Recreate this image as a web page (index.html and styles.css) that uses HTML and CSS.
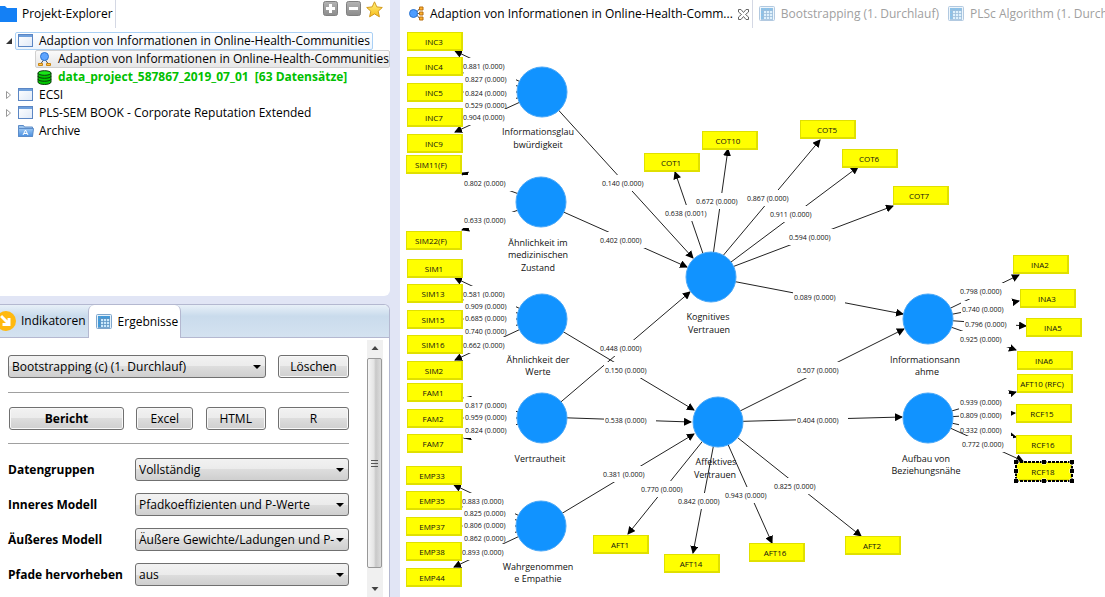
FILE: index.html
```html
<!DOCTYPE html>
<html lang="de">
<head>
<meta charset="utf-8">
<title>SmartPLS</title>
<link rel="stylesheet" href="styles.css">
</head>
<body>
<svg class="defs" aria-hidden="true">
  <defs>
    <linearGradient id="fade" x1="0" y1="0" x2="1" y2="1"><stop offset="0" stop-color="#fff"/><stop offset="1" stop-color="#dfe9f7"/></linearGradient>
    <linearGradient id="blue" x1="0" y1="0" x2="0" y2="1"><stop offset="0" stop-color="#9cc8f4"/><stop offset="1" stop-color="#4a8fe0"/></linearGradient>
    <linearGradient id="grey" x1="0" y1="0" x2="0" y2="1"><stop offset="0" stop-color="#b4b4b4"/><stop offset="1" stop-color="#8c8c8c"/></linearGradient>
    <linearGradient id="gold" x1="0" y1="0" x2="0" y2="1"><stop offset="0" stop-color="#fff27a"/><stop offset="1" stop-color="#f8bd1c"/></linearGradient>
    <symbol id="i-window" viewBox="0 0 16 14"><rect x=".5" y=".5" width="14" height="12" fill="url(#fade)" stroke="#5b86c4"/><path d="M1 2h13" stroke="#6fa0dc" stroke-width="2"/></symbol>
    <symbol id="i-table" viewBox="0 0 16 16"><rect x=".5" y=".5" width="15" height="14" rx="1" fill="#e4f1fb" stroke="#7fa6cc"/><path d="M2 2h12v11H2z" fill="#cbe8fb"/><path d="M2 2h12v3H2zM2 5h3v8H2z" fill="#3f9bdc"/><path d="M2 4.500h12M2 7.500h12M2 10.500h12M4.500 2v11M7.500 2v11M10.500 2v11M13.500 2v11M2 13.500h12" stroke="#5c93c4" stroke-width=".8"/></symbol>
  </defs>
</svg>
<div class="app">
  <div class="side">
    <section class="explorer">
      <header class="explorer-head">
        <h1 class="tab-title">
          <svg class="folder" width="17" height="17" viewBox="0 0 17 17"><path d="M0 0h5l2 2h10v14H0z" fill="#1480f5"/></svg>Projekt-Explorer
        </h1>
        <div class="tools">
          <button class="icon-btn" aria-label="Neu"><svg width="15" height="15"><rect x=".5" y=".5" width="14" height="14" rx="2" fill="url(#grey)" stroke="#808080"/><path d="M7.500 3v9M3 7.500h9" stroke="#fff" stroke-width="3"/></svg></button>
          <button class="icon-btn" aria-label="Entfernen"><svg width="15" height="15"><rect x=".5" y=".5" width="14" height="14" rx="2" fill="url(#grey)" stroke="#808080"/><path d="M3 7.500h9" stroke="#fff" stroke-width="3"/></svg></button>
          <button class="icon-btn" aria-label="Favorit"><svg width="17" height="17"><path d="M8.500.8l2.300 5.100 5.500.6-4.100 3.700 1.200 5.600-4.900-2.900-4.900 2.900 1.200-5.600L.7 6.500l5.500-.6z" fill="url(#gold)" stroke="#d39a1c"/></svg></button>
        </div>
      </header>
      <ul class="tree">
        <li class="row"><svg class="twist" width="8" height="8"><path d="M7 1v6H1z" fill="#333"/></svg><span class="item focus"><svg width="16" height="14"><use href="#i-window"/></svg>Adaption von Informationen in Online-Health-Communities</span></li>
        <li class="row sub"><span class="item picked"><svg width="16" height="15"><path d="M7.500 7L3.500 12M7.500 7l4 5" stroke="#555"/><circle cx="7.500" cy="4.500" r="4" fill="#5da4ff" stroke="#2d74cf"/><path d="M1.500 11.500h4v2h-4zM9.500 11.500h4v2h-4z" fill="#ffc34d" stroke="#c98410"/></svg>Adaption von Informationen in Online-Health-Communities</span></li>
        <li class="row sub"><span class="item data"><svg width="16" height="15"><path d="M1 3v9c0 3.300 13 3.300 13 0V3z" fill="#00c800" stroke="#0a3c0a"/><ellipse cx="7.500" cy="3" rx="6.500" ry="2.300" fill="#19e619" stroke="#0a3c0a"/><path d="M1 6c0 3 13 3 13 0M1 9c0 3 13 3 13 0" fill="none" stroke="#0a3c0a"/></svg>data_project_587867_2019_07_01&nbsp; [63 Datensätze]</span></li>
        <li class="row"><svg class="twist" width="8" height="8"><path d="M1.500.5L5.500 4l-4 3.500z" fill="#fff" stroke="#999"/></svg><span class="item"><svg width="16" height="14"><use href="#i-window"/></svg>ECSI</span></li>
        <li class="row"><svg class="twist" width="8" height="8"><path d="M1.500.5L5.500 4l-4 3.500z" fill="#fff" stroke="#999"/></svg><span class="item"><svg width="16" height="14"><use href="#i-window"/></svg>PLS-SEM BOOK - Corporate Reputation Extended</span></li>
        <li class="row"><span class="twist"></span><span class="item"><svg width="16" height="14"><path d="M.5 1.500h5l1 1.500h8v9.500H.5z" fill="#9cc4ee" stroke="#5c8cc8"/><path d="M.5 4.500h15l-1 8H.5z" fill="url(#blue)" stroke="#5c8cc8"/><path d="M5 11l2.500-5L10 11M6 9.500h3" fill="none" stroke="#fff"/></svg>Archive</span></li>
      </ul>
    </section>
    <section class="results">
      <nav class="tabs">
        <button class="tab"><svg width="16" height="20" viewBox="0 0 16 20"><circle cx="6" cy="10" r="10" fill="#ffb90f"/><path d="M1 5l7 7M9 7v6.500H2.500" fill="none" stroke="#fff" stroke-width="3"/></svg>Indikatoren</button>
        <button class="tab active"><svg width="16" height="16"><use href="#i-table"/></svg>Ergebnisse</button>
      </nav>
      <div class="pane">
        <form class="form">
          <div class="line run">
            <span class="drop"><select aria-label="Lauf"><option>Bootstrapping (c) (1. Durchlauf)</option></select></span>
            <button type="button" class="btn">Löschen</button>
          </div>
          <hr>
          <div class="line exports">
            <button type="button" class="btn strong">Bericht</button>
            <button type="button" class="btn">Excel</button>
            <button type="button" class="btn">HTML</button>
            <button type="button" class="btn">R</button>
          </div>
          <hr>
          <div class="fields">
            <label for="f1">Datengruppen</label><span class="drop"><select id="f1"><option>Vollständig</option></select></span>
            <label for="f2">Inneres Modell</label><span class="drop"><select id="f2"><option>Pfadkoeffizienten und P-Werte</option></select></span>
            <label for="f3">Äußeres Modell</label><span class="drop"><select id="f3"><option>Äußere Gewichte/Ladungen und P-Werte</option></select></span>
            <label for="f4">Pfade hervorheben</label><span class="drop"><select id="f4"><option>aus</option></select></span>
          </div>
        </form>
        <div class="scroll">
          <svg width="16" height="16"><path d="M4.500 10h7L8 6z" fill="#444"/></svg>
          <div class="thumb"><i></i><i></i><i></i></div>
          <svg width="16" height="16"><path d="M4.500 6h7L8 10z" fill="#444"/></svg>
        </div>
      </div>
    </section>
  </div>
  <main class="editor">
    <nav class="doc-tabs">
      <button class="doc active"><svg width="16" height="16"><path d="M6 7.500h4M7 7l4-5M7 8l4 5" stroke="#555"/><circle cx="4.500" cy="7.500" r="4" fill="#4d9dff" stroke="#2d74cf"/><path d="M10.500 1h3.500v3h-3.500zM10.500 6h3.500v3h-3.500zM10.500 11h3.500v3h-3.500z" fill="#ffb22e" stroke="#b86e10"/></svg><span>Adaption von Informationen in Online-Health-Comm...</span><svg class="close" width="11" height="11"><path d="M.5.5h2.500l2.500 3 2.500-3h2.500v2.500L7.500 5.500l3 2.500v2.500H8L5.500 7.500 3 10.500H.5V8l3-2.500-3-2.500z" fill="#fff" stroke="#666"/></svg></button>
      <button class="doc"><svg width="16" height="16"><use href="#i-table"/></svg><span>Bootstrapping (1. Durchlauf)</span></button>
      <button class="doc"><svg width="16" height="16"><use href="#i-table"/></svg><span>PLSc Algorithm (1. Durchlauf)</span></button>
    </nav>
    <svg class="model" width="705" height="569" viewBox="400 28 705 569" role="img" aria-label="Strukturmodell">
      <defs>
        <marker id="tip" viewBox="0 0 8 8" refX="7" refY="4" markerWidth="8" markerHeight="8" markerUnits="userSpaceOnUse" orient="auto"><path d="M0 0l8 4-8 4z"/></marker>
        <rect id="bg" x="-1" y="-8" width="52" height="16" fill="#fff"/>
        <g id="box"><rect width="56" height="19" fill="#e0e000"/><rect x="1" y="1" width="53" height="16" fill="#ff0"/></g>
      </defs>
      <g class="name">
        <text x="538" y="135">Informationsglau</text><text x="538" y="148">bwürdigkeit</text>
        <text x="538" y="246">Ähnlichkeit im</text><text x="538" y="258">medizinischen</text><text x="538" y="271">Zustand</text>
        <text x="538" y="363">Ähnlichkeit der</text><text x="538" y="375">Werte</text>
        <text x="540" y="462">Vertrautheit</text>
        <text x="538" y="570">Wahrgenommen</text><text x="538" y="582">e Empathie</text>
        <text x="708" y="320">Kognitives</text><text x="709" y="333">Vertrauen</text>
        <text x="716" y="465">Affektives</text><text x="715" y="478">Vertrauen</text>
        <text x="925" y="363">Informationsann</text><text x="927" y="375">ahme</text>
        <text x="926" y="462">Aufbau von</text><text x="926" y="474">Beziehungsnähe</text>
      </g>
      <g class="edges">
        <line x1="542" y1="92" x2="455" y2="51"/><use href="#bg" x="463" y="66"/><text x="463" y="69">0.881 (0.000)</text>
        <line x1="542" y1="92" x2="464" y2="73"/><use href="#bg" x="465" y="79"/><text x="465" y="82">0.827 (0.000)</text>
        <line x1="542" y1="92" x2="464" y2="92"/><use href="#bg" x="465" y="93"/><text x="465" y="96">0.824 (0.000)</text>
        <line x1="542" y1="92" x2="464" y2="111"/><use href="#bg" x="465" y="105"/><text x="465" y="108">0.529 (0.000)</text>
        <line x1="542" y1="92" x2="455" y2="132"/><use href="#bg" x="463" y="117"/><text x="463" y="120">0.904 (0.000)</text>
        <line x1="541" y1="202" x2="461" y2="173"/><use href="#bg" x="464" y="183"/><text x="464" y="186">0.802 (0.000)</text>
        <line x1="541" y1="202" x2="462" y2="230"/><use href="#bg" x="464" y="220"/><text x="464" y="223">0.633 (0.000)</text>
        <line x1="542" y1="319" x2="455" y2="278"/><use href="#bg" x="463" y="294"/><text x="463" y="297">0.581 (0.000)</text>
        <line x1="542" y1="319" x2="464" y2="300"/><use href="#bg" x="465" y="306"/><text x="465" y="309">0.909 (0.000)</text>
        <line x1="542" y1="319" x2="464" y2="319"/><use href="#bg" x="465" y="318"/><text x="465" y="321">0.685 (0.000)</text>
        <line x1="542" y1="319" x2="464" y2="338"/><use href="#bg" x="465" y="331"/><text x="465" y="334">0.740 (0.000)</text>
        <line x1="542" y1="319" x2="455" y2="360"/><use href="#bg" x="463" y="345"/><text x="463" y="348">0.662 (0.000)</text>
        <line x1="542" y1="418" x2="464" y2="398"/><use href="#bg" x="465" y="405"/><text x="465" y="408">0.817 (0.000)</text>
        <line x1="542" y1="418" x2="464" y2="418"/><use href="#bg" x="465" y="417"/><text x="465" y="420">0.959 (0.000)</text>
        <line x1="542" y1="418" x2="464" y2="438"/><use href="#bg" x="465" y="430"/><text x="465" y="433">0.824 (0.000)</text>
        <line x1="541" y1="526" x2="454" y2="485"/><use href="#bg" x="462" y="501"/><text x="462" y="504">0.883 (0.000)</text>
        <line x1="541" y1="526" x2="463" y2="507"/><use href="#bg" x="464" y="513"/><text x="464" y="516">0.825 (0.000)</text>
        <line x1="541" y1="526" x2="463" y2="526"/><use href="#bg" x="464" y="525"/><text x="464" y="528">0.806 (0.000)</text>
        <line x1="541" y1="526" x2="463" y2="545"/><use href="#bg" x="464" y="538"/><text x="464" y="541">0.862 (0.000)</text>
        <line x1="541" y1="526" x2="454" y2="567"/><use href="#bg" x="462" y="552"/><text x="462" y="555">0.893 (0.000)</text>

        <line x1="542" y1="92" x2="693" y2="258"/><use href="#bg" x="602" y="183"/><text x="602" y="186">0.140 (0.000)</text>
        <line x1="541" y1="202" x2="687" y2="267"/><use href="#bg" x="600" y="240"/><text x="600" y="243">0.402 (0.000)</text>
        <line x1="542" y1="418" x2="690" y2="292"/><use href="#bg" x="600" y="348"/><text x="600" y="351">0.448 (0.000)</text>
        <line x1="542" y1="319" x2="694" y2="410"/><use href="#bg" x="605" y="370"/><text x="605" y="373">0.150 (0.000)</text>
        <line x1="542" y1="417" x2="691" y2="422"/><use href="#bg" x="605" y="420"/><text x="605" y="423">0.538 (0.000)</text>
        <line x1="541" y1="526" x2="694" y2="434"/><use href="#bg" x="603" y="474"/><text x="603" y="477">0.381 (0.000)</text>
        <line x1="711" y1="277" x2="903" y2="314"/><use href="#bg" x="794" y="297"/><text x="794" y="300">0.089 (0.000)</text>
        <line x1="718" y1="422" x2="904" y2="329"/><use href="#bg" x="797" y="370"/><text x="797" y="373">0.507 (0.000)</text>
        <line x1="718" y1="422" x2="902" y2="417"/><use href="#bg" x="797" y="420"/><text x="797" y="423">0.404 (0.000)</text>

        <line x1="711" y1="277" x2="675" y2="172"/><use href="#bg" x="665" y="213"/><text x="665" y="216">0.638 (0.001)</text>
        <line x1="710" y1="277" x2="728" y2="149"/><use href="#bg" x="696" y="201"/><text x="696" y="204">0.672 (0.000)</text>
        <line x1="711" y1="270" x2="820" y2="140"/><use href="#bg" x="747" y="198"/><text x="747" y="201">0.867 (0.000)</text>
        <line x1="711" y1="277" x2="858" y2="167"/><use href="#bg" x="770" y="214"/><text x="770" y="217">0.911 (0.000)</text>
        <line x1="711" y1="275" x2="893" y2="206"/><use href="#bg" x="789" y="237"/><text x="789" y="240">0.594 (0.000)</text>

        <line x1="718" y1="422" x2="628" y2="534"/><use href="#bg" x="641" y="489"/><text x="641" y="492">0.770 (0.000)</text>
        <line x1="718" y1="422" x2="693" y2="553"/><use href="#bg" x="678" y="501"/><text x="678" y="504">0.842 (0.000)</text>
        <line x1="718" y1="422" x2="772" y2="543"/><use href="#bg" x="725" y="495"/><text x="725" y="498">0.943 (0.000)</text>
        <line x1="718" y1="422" x2="861" y2="536"/><use href="#bg" x="774" y="486"/><text x="774" y="489">0.825 (0.000)</text>

        <line x1="928" y1="319" x2="1019" y2="275"/><use href="#bg" x="960" y="291"/><text x="960" y="294">0.798 (0.000)</text>
        <line x1="928" y1="319" x2="1019" y2="301"/><use href="#bg" x="962" y="309"/><text x="962" y="312">0.740 (0.000)</text>
        <line x1="928" y1="319" x2="1026" y2="326"/><use href="#bg" x="965" y="324"/><text x="965" y="327">0.796 (0.000)</text>
        <line x1="928" y1="319" x2="1016" y2="350"/><use href="#bg" x="960" y="339"/><text x="960" y="342">0.925 (0.000)</text>
        <line x1="928" y1="418" x2="1016" y2="392"/><use href="#bg" x="960" y="402"/><text x="960" y="405">0.939 (0.000)</text>
        <line x1="928" y1="418" x2="1015" y2="413"/><use href="#bg" x="960" y="415"/><text x="960" y="418">0.809 (0.000)</text>
        <line x1="928" y1="418" x2="1016" y2="437"/><use href="#bg" x="960" y="430"/><text x="960" y="433">0.332 (0.000)</text>
        <line x1="928" y1="418" x2="1023" y2="461"/><use href="#bg" x="962" y="444"/><text x="962" y="447">0.772 (0.000)</text>
      </g>
      <g class="construct">
        <circle cx="542" cy="92" r="25"/><circle cx="541" cy="202" r="25"/><circle cx="542" cy="319" r="25"/><circle cx="542" cy="418" r="25"/><circle cx="541" cy="526" r="25"/>
        <circle cx="711" cy="277" r="25"/><circle cx="718" cy="422" r="25"/><circle cx="928" cy="319" r="25"/><circle cx="928" cy="418" r="25"/>
      </g>
      <g class="indicator">
        <use href="#box" x="407" y="32"/><text x="434" y="45">INC3</text>
        <use href="#box" x="407" y="57"/><text x="434" y="70">INC4</text>
        <use href="#box" x="407" y="83"/><text x="434" y="96">INC5</text>
        <use href="#box" x="407" y="108"/><text x="434" y="121">INC7</text>
        <use href="#box" x="407" y="134"/><text x="434" y="147">INC9</text>
        <use href="#box" x="406" y="155"/><text x="431" y="168">SIM11(F)</text>
        <use href="#box" x="406" y="231"/><text x="431" y="244">SIM22(F)</text>
        <use href="#box" x="407" y="259"/><text x="434" y="272">SIM1</text>
        <use href="#box" x="407" y="284"/><text x="433" y="297">SIM13</text>
        <use href="#box" x="407" y="310"/><text x="433" y="323">SIM15</text>
        <use href="#box" x="407" y="335"/><text x="433" y="348">SIM16</text>
        <use href="#box" x="407" y="361"/><text x="434" y="374">SIM2</text>
        <use href="#box" x="407" y="383"/><text x="433" y="396">FAM1</text>
        <use href="#box" x="407" y="409"/><text x="433" y="422">FAM2</text>
        <use href="#box" x="407" y="434"/><text x="433" y="447">FAM7</text>
        <use href="#box" x="406" y="466"/><text x="432" y="479">EMP33</text>
        <use href="#box" x="406" y="491"/><text x="432" y="504">EMP35</text>
        <use href="#box" x="406" y="517"/><text x="432" y="530">EMP37</text>
        <use href="#box" x="406" y="542"/><text x="432" y="555">EMP38</text>
        <use href="#box" x="406" y="568"/><text x="432" y="581">EMP44</text>
        <use href="#box" x="644" y="153"/><text x="671" y="166">COT1</text>
        <use href="#box" x="702" y="131"/><text x="728" y="144">COT10</text>
        <use href="#box" x="800" y="120"/><text x="827" y="133">COT5</text>
        <use href="#box" x="842" y="149"/><text x="869" y="162">COT6</text>
        <use href="#box" x="893" y="186"/><text x="919" y="199">COT7</text>
        <use href="#box" x="593" y="535"/><text x="620" y="548">AFT1</text>
        <use href="#box" x="664" y="554"/><text x="691" y="567">AFT14</text>
        <use href="#box" x="749" y="543"/><text x="775" y="556">AFT16</text>
        <use href="#box" x="845" y="536"/><text x="872" y="549">AFT2</text>
        <use href="#box" x="1013" y="255"/><text x="1040" y="268">INA2</text>
        <use href="#box" x="1020" y="289"/><text x="1047" y="302">INA3</text>
        <use href="#box" x="1026" y="318"/><text x="1053" y="331">INA5</text>
        <use href="#box" x="1017" y="351"/><text x="1044" y="364">INA6</text>
        <use href="#box" x="1017" y="374"/><text x="1042" y="387">AFT10 (RFC)</text>
        <use href="#box" x="1016" y="404"/><text x="1042" y="417">RCF15</text>
        <use href="#box" x="1016" y="435"/><text x="1043" y="448">RCF16</text>
        <use href="#box" x="1016" y="462"/><text x="1043" y="475">RCF18</text>
      </g>
      <g class="selection">
        <rect x="1016" y="462" width="56" height="19"/>
        <path d="M1014 460h4v4h-4zM1042 460h4v4h-4zM1070 460h4v4h-4zM1014 469h4v4h-4zM1070 469h4v4h-4zM1014 479h4v4h-4zM1042 479h4v4h-4zM1070 479h4v4h-4z"/>
      </g>
    </svg>
  </main>
</div>
</body>
</html>
```
FILE: styles.css
```css
* { box-sizing: border-box; }
body { margin: 0; background: #e1e5f5; color: #000; font: 12px/18px "Open Sans", "Noto Sans", sans-serif; }
button, select { font: inherit; color: inherit; }
.defs { position: absolute; width: 0; height: 0; }
.app { display: flex; gap: 10px; height: 100vh; overflow: hidden; }

.side { flex: 0 0 390px; display: flex; flex-direction: column; gap: 8px; min-width: 0; min-height: 0; }
.explorer { flex: 1 1 0; background: #fff; border-bottom-right-radius: 6px; }
.explorer-head { display: flex; justify-content: space-between; align-items: flex-start; height: 32px; }
.tab-title { display: flex; align-items: center; gap: 5px; height: 28px; margin: 0; padding-right: 2px; font-size: 12px; font-weight: 400; border-right: 1px solid #d4d8e4; }
.tools { display: flex; gap: 8px; padding: 1px 7px 0 0; }
.tools .icon-btn:last-child { margin-left: -3px; }
.icon-btn { display: flex; padding: 0; border: 0; background: none; }
.tree { list-style: none; margin: 0; padding: 0; }
.row { display: flex; align-items: center; gap: 2px; height: 18px; padding-left: 5px; }
.row.sub { padding-left: 35px; }
.twist { flex: none; width: 8px; }
.item { display: flex; align-items: center; gap: 5px; height: 18px; padding: 0 2px; border: 1px solid transparent; border-radius: 2px; white-space: nowrap; }
.item svg { flex: none; }
.row.sub .item { padding: 0 0 0 1px; }
.item.focus { border-color: #a9d0f5; background: linear-gradient(#fff, #eef5fd); }
.item.picked { border-color: #d0d0d0; background: linear-gradient(#fafafa, #e6e6e6); }
.item.data { color: #00c000; font-weight: 700; }

.results { flex: 0 0 293px; display: flex; flex-direction: column; background: #fff; border-top: 1px solid #b4b8d0; border-right: 1px solid #b4b8d0; border-top-right-radius: 6px; }
.tabs { display: flex; height: 33px; background: linear-gradient(#e8f0f8, #c9dbec 35%, #d4e2f0); border-bottom: 1px solid #b4b8d0; border-top-right-radius: 5px; }
.tab { display: flex; align-items: center; gap: 5px; padding: 0 2px 0 0; border: 0; background: none; }
.tab.active { gap: 6px; height: 33px; padding: 0 2px 0 7px; background: #fff; border: 1px solid #b4b8d0; border-width: 0 1px; border-radius: 6px 6px 0 0; }
.pane { flex: 1; display: flex; justify-content: space-between; min-height: 0; }
.form { flex: 1; padding: 17px 0 0 8px; max-width: 349px; }
.line { display: grid; gap: 12px; }
.line.run { grid-template-columns: 1fr 71px; padding-bottom: 1px; }
.line.exports { grid-template-columns: 115px 57px 60px 71px; justify-content: space-between; padding-left: 1px; }
hr { height: 1px; margin: 13px 0 14px; border: 0; background: #a0a0a0; }
.btn, select { height: 23px; border: 1px solid #707070; border-radius: 3px; background: linear-gradient(#f2f2f2, #ebebeb 50%, #dddddd 50%, #cfcfcf); }
.btn { padding: 0; line-height: 20px; box-shadow: inset 0 0 0 1px #f8f8f8; }
.strong { font-weight: 700; }
.drop { position: relative; display: block; min-width: 0; }
.drop::after { content: ""; position: absolute; right: 5px; top: 10px; border: 4px solid transparent; border-top-color: #000; border-bottom: 0; pointer-events: none; }
select { display: block; width: 100%; padding: 0 14px 0 3px; appearance: none; }
.fields { display: grid; grid-template-columns: 117px 1fr; gap: 12px 10px; align-items: center; }
.fields label { font-weight: 700; white-space: nowrap; }

.scroll { display: flex; flex-direction: column; width: 16px; margin: 2px 6px 0 0; background: #f0f0f0; }
.scroll svg { flex: none; display: block; }
.thumb { flex: 1; display: flex; flex-direction: column; align-items: center; justify-content: center; gap: 1px; margin: 2px 1px 13px 0; border: 1px solid #989898; border-radius: 2px; background: linear-gradient(90deg, #f5f5f5, #e4e4e4 45%, #c8c8c8 60%, #dcdcdc); }
.thumb i { width: 7px; height: 2px; border-bottom: 1px solid #555; }

.editor { flex: 1; min-width: 0; background: #fff; overflow: hidden; }
.doc-tabs { display: flex; height: 28px; white-space: nowrap; }
.doc { flex: none; display: flex; align-items: center; gap: 6px; padding: 0 3px 0 6px; border: 0; background: none; color: #a0a0a0; }
.doc svg { flex: none; opacity: .6; }
.doc.active { color: #000; gap: 5px; padding: 0 3px 0 9px; border-right: 1px solid #d4d8e4; }
.doc.active svg { opacity: 1; }
.model { display: block; }
.model text { fill: #111; }
.name text { font-size: 9px; text-anchor: middle; }
.edges line { stroke: #222; marker-end: url(#tip); }
.edges text { font-size: 7px; }
.indicator text { font-size: 8px; text-anchor: middle; }
.construct circle { fill: #1193ff; stroke: #4aa8f8; }
.selection rect { fill: none; stroke: #000; stroke-width: 2; stroke-dasharray: 3 1; }
.selection path { fill: #000; stroke: #fff; stroke-width: 1; paint-order: stroke; }
```
